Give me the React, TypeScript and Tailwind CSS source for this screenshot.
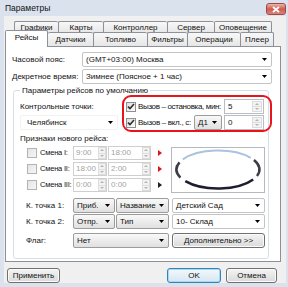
import React from "react";

function Arrow({ c = "#000" }: { c?: string }) {
  return (
    <svg width="5" height="3" viewBox="0 0 5 3" className="shrink-0">
      <path d="M0 0H5L2.5 3Z" fill={c} />
    </svg>
  );
}

function Combo({
  text,
  className = "",
  white = false,
}: {
  text: string;
  className?: string;
  white?: boolean;
}) {
  return (
    <div
      className={`flex items-center justify-between h-full pl-[3px] pr-[4px] border rounded-[2px] shrink-0 ${
        white
          ? "bg-white border-[#c4c4c4]"
          : "bg-linear-to-b from-[#f9f9f9] to-[#e0e0e0] border-[#9c9c9c]"
      } ${className}`}
    >
      <span className="whitespace-nowrap">{text}</span>
      <Arrow />
    </div>
  );
}

function Spin({ w = "w-[8px]" }: { w?: string }) {
  return (
    <div className={`flex flex-col ${w} h-full border border-[#dcdcdc] bg-[#f3f3f3] shrink-0`}>
      <div className="flex-1 flex items-center justify-center border-b border-[#dedede]">
        <svg width="4" height="2" viewBox="0 0 4 2">
          <path d="M0 2H4L2 0Z" fill="#b4b4b4" />
        </svg>
      </div>
      <div className="flex-1 flex items-center justify-center">
        <svg width="4" height="2" viewBox="0 0 4 2">
          <path d="M0 0H4L2 2Z" fill="#b4b4b4" />
        </svg>
      </div>
    </div>
  );
}

function TimeBox({ text, className }: { text: string; className: string }) {
  return (
    <div className={`flex items-center h-full border border-[#cfcfcf] bg-white pl-[2px] shrink-0 ${className}`}>
      <span className="flex-1 text-[#a3a3a3]">{text}</span>
      <Spin />
    </div>
  );
}

function NumBox({ text }: { text: string }) {
  return (
    <div className="flex items-center h-full w-[40px] border border-[#b9bcc2] bg-white pl-[3px] pr-[1px] py-[1px] shrink-0">
      <span className="flex-1">{text}</span>
      <Spin w="w-[10px]" />
    </div>
  );
}

function Check({ checked = false, dis = false }: { checked?: boolean; dis?: boolean }) {
  return (
    <div
      className={`w-[10px] h-[10px] border flex items-center justify-center shrink-0 ${
        dis
          ? "border-[#b3b3b3] bg-linear-to-br from-[#e4e4e4] to-[#f7f7f7]"
          : "border-[#8e8f8f] bg-linear-to-br from-[#dcdcdc] to-[#ffffff]"
      }`}
    >
      {checked && (
        <svg width="8" height="7" viewBox="0 0 8 7">
          <path d="M1 3.6L3 5.6L7 1" stroke="#303030" strokeWidth="1.6" fill="none" />
        </svg>
      )}
    </div>
  );
}

function Btn({ text, className = "", def = false }: { text: string; className?: string; def?: boolean }) {
  return (
    <div
      className={`h-full flex items-center justify-center rounded-[3px] border shrink-0 ${
        def
          ? "border-[#3c7fb1] shadow-[inset_0_0_0_1px_#9fdcfa] bg-linear-to-b from-[#f4f9fc] to-[#d6e6f0]"
          : "border-[#707070] shadow-[inset_0_0_0_1px_#fbfbfb] bg-linear-to-b from-[#f4f4f4] to-[#dadada]"
      } ${className}`}
    >
      {text}
    </div>
  );
}

function Tri({ c }: { c: string }) {
  return (
    <svg width="4" height="6" viewBox="0 0 4 6" className="shrink-0">
      <path d="M0 0L4 3L0 6Z" fill={c} />
    </svg>
  );
}

function Ring() {
  const cx = 46,
    cy = 21.5,
    rx = 41.5,
    ry = 19;
  const p = (a: number) => [cx + rx * Math.cos((a * Math.PI) / 180), cy + ry * Math.sin((a * Math.PI) / 180)];
  const arc = (a0: number, a1: number) => {
    const [x0, y0] = p(a0);
    const [x1, y1] = p(a1);
    const span = (a1 - a0 + 360) % 360;
    return `M${x0} ${y0}A${rx} ${ry} 0 ${span > 180 ? 1 : 0} 1 ${x1} ${y1}`;
  };
  return (
    <svg width="92" height="44" viewBox="0 0 92 44">
      <path d={arc(212, 322)} stroke="#a9c3e0" strokeWidth="2" fill="none" />
      <path d={arc(330, 20)} stroke="#3c3c44" strokeWidth="2.5" fill="none" />
      <path d={arc(32, 142)} stroke="#1e1e30" strokeWidth="2.5" fill="none" />
      <path d={arc(155, 202)} stroke="#3c3c44" strokeWidth="2.5" fill="none" />
    </svg>
  );
}

const tabs1 = [
  { t: "Графики", w: "w-[44px]" },
  { t: "Карты", w: "w-[45px]" },
  { t: "Контроллер", w: "w-[64px]" },
  { t: "Сервер", w: "w-[47px]" },
  { t: "Оповещение", w: "w-[58px]", last: true },
];

const tabs2 = [
  { t: "Датчики", w: "w-[45px]", nol: true },
  { t: "Топливо", w: "w-[54px]" },
  { t: "Фильтры", w: "w-[40px]" },
  { t: "Операции", w: "w-[53px]" },
  { t: "Плеер", w: "w-[34px]", last: true },
];

const shifts = [
  { l: "Смена I:", a: "9:00", b: "18:00", c: "#e0141e" },
  { l: "Смена II:", a: "18:00", b: "2:00", c: "#e0141e" },
  { l: "Смена III:", a: "0:00", b: "0:00", c: "#202020" },
];

export default function App() {
  return (
    <div className="w-[288px] h-[287px] bg-[#dae3ed] flex flex-col font-['Liberation_Sans',Arial,sans-serif] text-[8px] leading-none text-[#111] overflow-hidden">
      {/* title bar */}
      <div className="h-[16px] flex items-center justify-between pl-[5px]">
        <span className="text-[8.5px]">Параметры</span>
        <div className="mr-[2px] mt-[2px] w-[20px] h-[12px] rounded-[3px] border border-[#a04848] bg-linear-to-b from-[#e8b6ad] via-[#cf5a4e] to-[#d9857a] flex items-center justify-center">
          <svg width="8" height="7" viewBox="0 0 8 7">
            <path d="M1 1L7 6M7 1L1 6" stroke="#fff" strokeWidth="1.8" />
          </svg>
        </div>
      </div>

      {/* client */}
      <div className="ml-[4px] mr-[2px] mb-[4px] flex-1 bg-[#f0f0f0] flex flex-col pt-[5px]">
        {/* tab row 1 */}
        <div className="h-[12px] flex pl-[10px]">
          {tabs1.map((x) => (
            <div
              key={x.t}
              className={`${x.w} h-full flex items-center justify-center border-t border-l ${
                x.last ? "border-r" : ""
              } border-[#8d9099] rounded-t-[2px] bg-linear-to-b from-[#f8f8f8] to-[#e6e6e6]`}
            >
              {x.t}
            </div>
          ))}
        </div>
        {/* tab row 2 */}
        <div className="h-[13px] flex items-end pl-[1px]">
          <div className="relative z-10 w-[43px] h-[17px] -mb-[1px] flex items-center justify-center pb-[2px] border-t border-l border-r border-[#8d9099] rounded-t-[2px] bg-white">
            Рейсы
          </div>
          {tabs2.map((x) => (
            <div
              key={x.t}
              className={`${x.w} h-[14px] flex items-center justify-center border-t ${x.nol ? "" : "border-l"} ${
                x.last ? "border-r" : ""
              } border-[#8d9099] rounded-t-[2px] bg-linear-to-b from-[#f8f8f8] to-[#e6e6e6]`}
            >
              {x.t}
            </div>
          ))}
        </div>

        {/* panel */}
        <div className="ml-[1px] w-[276px] h-[216px] border border-[#8d9099] bg-white flex flex-col">
          <div className="mt-[5px] h-[15px] flex items-center">
            <div className="w-[76px] pl-[6px] whitespace-nowrap">Часовой пояс:</div>
            <Combo text="(GMT+03:00) Москва" className="w-[190px]" white />
          </div>
          <div className="mt-[2px] h-[15px] flex items-center">
            <div className="w-[76px] pl-[6px] whitespace-nowrap">Декретное время:</div>
            <Combo text="Зимнее (Поясное + 1 час)" className="w-[190px]" white />
          </div>

          <fieldset className="ml-[7px] mt-[1px] w-[256px] h-[174px] border border-[#d5dfe5] rounded-[3px] flex flex-col">
            <legend className="ml-[6px] px-[2px] leading-[11px]">Параметры рейсов по умолчанию</legend>

            <div className="mt-[3px] flex">
              <div className="w-[112px] pl-[6px] flex flex-col gap-[1px]">
                <div className="h-[15px] flex items-center">Контрольные точки:</div>
                <div className="h-[15px] w-[98px]">
                  <Combo text="Челябинск" className="pl-[6px] border-[#f2f2f2]" white />
                </div>
              </div>
              <div className="relative w-[138px] flex flex-col gap-[1px]">
                <div className="h-[15px] flex items-center">
                  <Check checked />
                  <span className="ml-[2px] flex-1 min-w-0 whitespace-nowrap tracking-[-0.35px]">Вызов – остановка, мин:</span>
                  <NumBox text="5" />
                </div>
                <div className="h-[15px] flex items-center">
                  <Check checked />
                  <span className="ml-[2px] flex-1 min-w-0 whitespace-nowrap tracking-[-0.3px]">Вызов – вкл., с:</span>
                  <Combo text="Д1" className="w-[28px] mr-[2px]" />
                  <NumBox text="0" />
                </div>
                <div className="absolute left-[-4px] top-[-4px] w-[150px] h-[37px] border-2 border-[#e8141c] rounded-[9px]" />
              </div>
            </div>

            <div className="mt-[3px] h-[11px] pl-[6px] flex items-center">Признаки нового рейса:</div>

            <div className="mt-[2px] flex">
              <div className="pl-[13px] flex flex-col gap-[2px]">
                {shifts.map((s) => (
                  <div key={s.l} className="h-[14px] flex items-center">
                    <Check dis />
                    <span className="ml-[3px] w-[33px] whitespace-nowrap text-[7.5px] tracking-[-0.2px]">{s.l}</span>
                    <TimeBox text={s.a} className="w-[34px]" />
                    <TimeBox text={s.b} className="w-[43px] ml-[1px]" />
                    <div className="ml-[7px]">
                      <Tri c={s.c} />
                    </div>
                  </div>
                ))}
              </div>
              <div className="ml-[9px] mt-[1px] w-[94px] h-[46px] border border-[#b5b9c0] bg-white">
                <Ring />
              </div>
            </div>

            <div className="mt-[5px] h-[15px] flex items-center pl-[12px]">
              <div className="w-[47px]">К. точка 1:</div>
              <Combo text="Приб." className="w-[42px]" />
              <Combo text="Название" className="w-[53px] ml-[1px]" />
              <Combo text="Детский Сад" className="w-[93px] ml-[3px]" white />
            </div>
            <div className="mt-[1px] h-[15px] flex items-center pl-[12px]">
              <div className="w-[47px]">К. точка 2:</div>
              <Combo text="Отпр." className="w-[42px]" />
              <Combo text="Тип" className="w-[53px] ml-[1px]" />
              <Combo text="10- Склад" className="w-[93px] ml-[3px]" white />
            </div>
            <div className="mt-[4px] h-[15px] flex items-center pl-[12px]">
              <div className="w-[47px]">Флаг:</div>
              <Combo text="Нет" className="w-[96px]" />
              <Btn text="Дополнительно >>" className="w-[93px] ml-[3px]" />
            </div>
          </fieldset>
        </div>

        {/* bottom buttons */}
        <div className="mt-[6px] h-[15px] flex">
          <Btn text="Применить" className="ml-[3px] w-[53px]" />
          <Btn text="OK" className="ml-auto w-[54px]" def />
          <Btn text="Отмена" className="ml-[5px] mr-[9px] w-[51px]" />
        </div>
      </div>
    </div>
  );
}
